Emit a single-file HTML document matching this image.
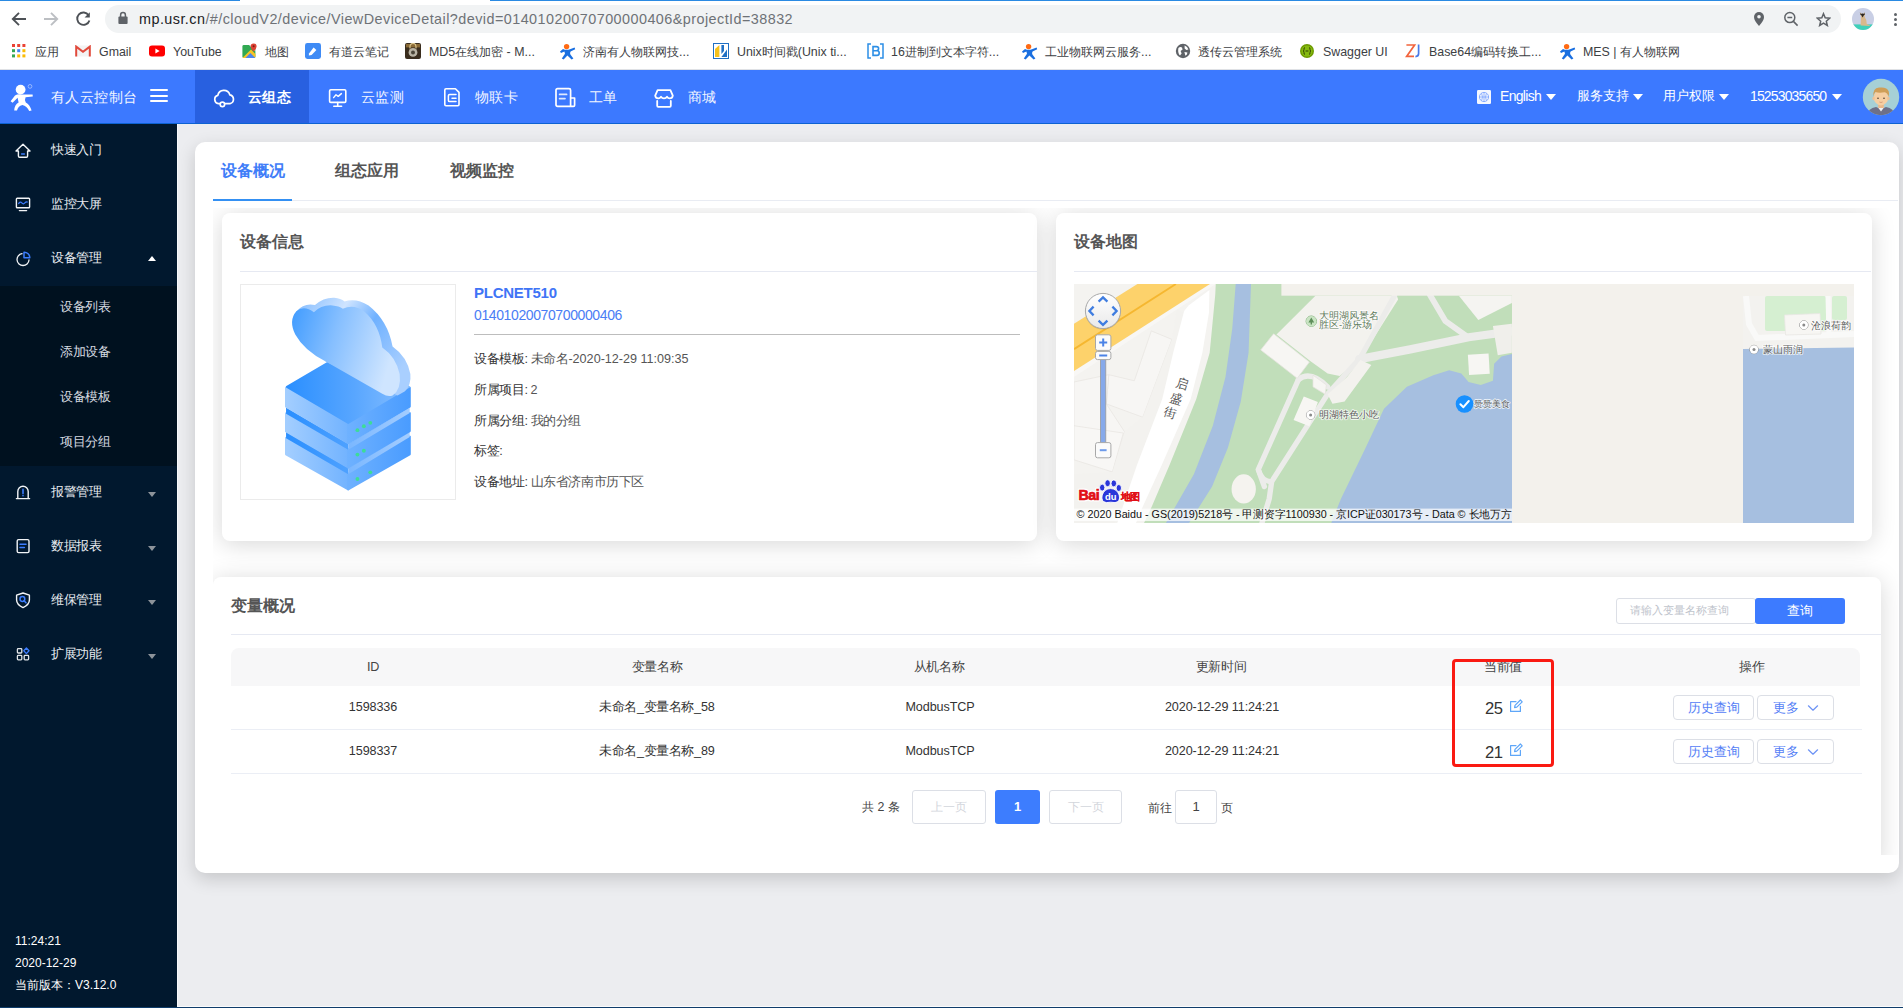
<!DOCTYPE html>
<html lang="zh">
<head>
<meta charset="utf-8">
<title>device</title>
<style>
*{box-sizing:border-box;margin:0;padding:0}
html,body{width:1903px;height:1008px;overflow:hidden;background:#fff;font-family:"Liberation Sans",sans-serif;}
.a{position:absolute;white-space:nowrap;overflow:hidden}
.t{position:absolute;white-space:nowrap;line-height:1}
/* ---------- browser chrome ---------- */
#chrome{left:0;top:0;width:1903px;height:70px;background:#fff}
#pill{left:105px;top:5px;width:1736px;height:28px;border-radius:14px;background:#f1f3f4}
.bm{font-size:12.4px;color:#3c4043;top:45.6px}
/* ---------- header ---------- */
#hdr{left:0;top:70px;width:1903px;height:54px;background:#3c79ff}
#hact{left:195px;top:0;width:114px;height:54px;background:#2860e0}
.tri{width:0;height:0;border-left:5px solid transparent;border-right:5px solid transparent;border-top:6.5px solid #fff}
/* ---------- sidebar ---------- */
#side{left:0;top:124px;width:177px;height:884px;background:#01182e}
#sub{left:0;top:162px;width:177px;height:180px;background:#00111f}
.st{letter-spacing:-0.4px;font-size:12.6px;color:#e8ecf1;left:51px}
.ss{letter-spacing:-0.4px;font-size:12.6px;color:#d5dae0;left:60px}
/* ---------- main ---------- */
#main{left:177px;top:124px;width:1726px;height:884px;background:#ecedf0}
#card{left:195px;top:142px;width:1704px;height:731px;background:#fff;border-radius:10px;box-shadow:0 6px 18px rgba(0,0,0,.165)}
.box{background:#fff;border-radius:8px;box-shadow:0 3px 24px rgba(0,0,0,.16)}
.h2{font-size:16px;font-weight:bold;color:#555}
.ln{background:#e6e9f2;height:1px}
.inf{letter-spacing:-0.4px;font-size:12.6px;color:#555;left:474px}
.th{letter-spacing:-0.4px;font-size:12.6px;color:#444;text-align:center;width:200px}
.td{font-size:12.6px;color:#333;text-align:center;width:240px;letter-spacing:-0.1px}
.btn{border:1px solid #dcdfe6;border-radius:4px;background:#fff;color:#5580f6;font-size:12.6px;height:25px;line-height:25px;text-align:center}
</style>
</head>
<body>
<!-- ======= BROWSER CHROME ======= -->
<div id="chrome" class="a">
  <div class="a" style="left:0;top:0;width:240px;height:1px;background:#2a8ae2"></div>
  <div class="a" style="left:490px;top:0;width:1413px;height:1px;background:#2a8ae2"></div>
  <div id="pill" class="a"></div>
  <!-- nav arrows -->
  <svg class="a" style="left:10px;top:10px" width="18" height="18" viewBox="0 0 18 18" fill="none" stroke="#4d5156" stroke-width="1.9" stroke-linejoin="miter"><path d="M16 9 H3.4 M9 2.8 L2.8 9 L9 15.2"/></svg>
  <svg class="a" style="left:42px;top:10px" width="18" height="18" viewBox="0 0 18 18" fill="none" stroke="#bcbfc3" stroke-width="1.9" stroke-linejoin="miter"><path d="M2 9 H14.6 M9 2.8 L15.2 9 L9 15.2"/></svg>
  <svg class="a" style="left:74px;top:10px" width="18" height="18" viewBox="0 0 18 18" fill="none" stroke="#4d5156" stroke-width="1.9"><path d="M14.6 5.2 A6.2 6.2 0 1 0 15.4 10.4"/><path d="M15.8 2.2 V7.4 H10.6 Z" fill="#4d5156" stroke="none"/></svg>
  <!-- lock -->
  <svg class="a" style="left:117px;top:11px" width="12" height="14" viewBox="0 0 12 14"><rect x="1.4" y="5.6" width="9.2" height="7.4" rx="1" fill="#5f6368"/><path d="M3.6 6 V4 A2.4 2.4 0 0 1 8.4 4 V6" fill="none" stroke="#5f6368" stroke-width="1.5"/></svg>
  <div class="t" id="url" style="left:139px;top:12px;font-size:14.4px;color:#202124;letter-spacing:0.445px">mp.usr.cn<span style="color:#6e7277">/#/cloudV2/device/ViewDeviceDetail?devid=01401020070700000406&amp;projectId=38832</span></div>
  <!-- right icons -->
  <svg class="a" style="left:1752px;top:11px" width="14" height="16" viewBox="0 0 14 16"><path d="M7 1 A5 5 0 0 1 12 6 Q12 9.6 7 15 Q2 9.6 2 6 A5 5 0 0 1 7 1 Z" fill="#5f6368"/><circle cx="7" cy="5.8" r="1.8" fill="#f1f3f4"/></svg>
  <svg class="a" style="left:1783px;top:11px" width="16" height="16" viewBox="0 0 16 16" fill="none" stroke="#5f6368" stroke-width="1.5"><circle cx="6.8" cy="6.6" r="5"/><path d="M10.4 10.4 L14.6 14.6 M4.4 6.6 H9.2"/></svg>
  <svg class="a" style="left:1815.5px;top:11.5px" width="15" height="15" viewBox="0 0 16 16" fill="none" stroke="#5f6368" stroke-width="1.6" stroke-linejoin="miter"><path d="M8 1.8 L9.8 6.2 L14.6 6.6 L11 9.8 L12.1 14.4 L8 11.9 L3.9 14.4 L5 9.8 L1.4 6.6 L6.2 6.2 Z"/></svg>
  <svg class="a" style="left:1851px;top:7px" width="24" height="24" viewBox="0 0 24 24"><defs><clipPath id="cav"><circle cx="12" cy="12" r="11"/></clipPath></defs><g clip-path="url(#cav)"><rect width="24" height="24" fill="#c9cfe5"/><rect y="17.4" width="24" height="7" fill="#3fd0b9"/><path d="M9.6 18.6 L10 9.6 L8.8 5.2 L10.6 6.8 L12.6 6.8 L14 5.2 L13.6 9.8 Q15.8 12.6 15.8 17 L19 18.4 L19 19 Z" fill="#d8b98c"/><path d="M9.6 7 L11.6 10.6 L13.6 7 Q11.6 6 9.6 7 Z" fill="#2b2622"/><path d="M8.8 5.2 L10.2 7.4 L9.6 8 Z M14 5.2 L12.9 7.4 L13.5 8 Z" fill="#2b2622"/></g></svg>
  <div class="a" style="left:1894px;top:13px;width:3px;height:3px;border-radius:50%;background:#5f6368"></div>
  <div class="a" style="left:1894px;top:18px;width:3px;height:3px;border-radius:50%;background:#5f6368"></div>
  <div class="a" style="left:1894px;top:23px;width:3px;height:3px;border-radius:50%;background:#5f6368"></div>
  <!-- bookmarks bar -->
  <div class="a" style="left:0;top:69px;width:1903px;height:1px;background:#dfe1e5"></div>
  <svg class="a" style="left:12px;top:44px" width="14" height="14" viewBox="0 0 14 14"><rect x="0" y="0" width="3" height="3" fill="#ea4335"/><rect x="5.2" y="0" width="3" height="3" fill="#ea4335"/><rect x="10.4" y="0" width="3" height="3" fill="#ea4335"/><rect x="0" y="5.2" width="3" height="3" fill="#34a853"/><rect x="5.2" y="5.2" width="3" height="3" fill="#4285f4"/><rect x="10.4" y="5.2" width="3" height="3" fill="#fbbc05"/><rect x="0" y="10.4" width="3" height="3" fill="#34a853"/><rect x="5.2" y="10.4" width="3" height="3" fill="#fbbc05"/><rect x="10.4" y="10.4" width="3" height="3" fill="#fbbc05"/></svg>
  <div class="t bm" style="left:35px">应用</div>
  <svg class="a" style="left:75px;top:45px" width="16" height="12" viewBox="0 0 16 12"><rect x="0.4" y="0.6" width="15.2" height="11" rx="1" fill="#f3f3f3"/><path d="M1.2 11.4 V1.6 L8 6.8 L14.8 1.6 V11.4" fill="none" stroke="#e14a3c" stroke-width="2"/></svg>
  <div class="t bm" style="left:99px">Gmail</div>
  <svg class="a" style="left:149px;top:45px" width="16" height="12" viewBox="0 0 16 12"><rect x="0" y="0.4" width="16" height="11.2" rx="3" fill="#ff0000"/><path d="M6.4 3.4 L10.6 6 L6.4 8.6 Z" fill="#fff"/></svg>
  <div class="t bm" style="left:173px">YouTube</div>
  <svg class="a" style="left:242px;top:43px" width="16" height="16" viewBox="0 0 16 16"><rect x="0.4" y="2" width="13" height="13" rx="1.4" fill="#31a952"/><path d="M0.4 15 L9 6.4 L13.4 11 V13.6 Q13.4 15 12 15 Z" fill="#f9c325"/><path d="M3.4 15 L8.4 10 L13.4 15 Z" fill="#4e86ec"/><path d="M7 2 L13.4 8.4 V3.4 Q13.4 2 12 2 Z" fill="#e9ecef"/><path d="M11.6 0.4 A3 3 0 0 1 14.6 3.4 Q14.6 5.4 11.6 8.4 Q8.6 5.4 8.6 3.4 A3 3 0 0 1 11.6 0.4 Z" fill="#dc4335"/><circle cx="11.6" cy="3.3" r="1" fill="#7e1b14"/></svg>
  <div class="t bm" style="left:265px">地图</div>
  <svg class="a" style="left:305px;top:43px" width="16" height="16" viewBox="0 0 16 16"><rect width="16" height="16" rx="2.4" fill="#3f8bf5"/><path d="M4 10.6 L8.6 4.6 L11.4 7 L6.6 12 L3.8 12.4 Z" fill="#fff"/></svg>
  <div class="t bm" style="left:329px">有道云笔记</div>
  <svg class="a" style="left:405px;top:43px" width="16" height="16" viewBox="0 0 16 16"><rect width="16" height="16" rx="2" fill="#3a2d1e"/><rect x="1" y="1" width="14" height="3.4" fill="#8a6a36"/><circle cx="8" cy="9.4" r="4.4" fill="#b9b3a4"/><circle cx="8" cy="9.4" r="2" fill="#4b4538"/><path d="M5 5.4 V3.4 A3 3 0 0 1 11 3.4 V5.4" fill="none" stroke="#d9c48c" stroke-width="1.2"/></svg>
  <div class="t bm" style="left:429px">MD5在线加密 - M...</div>
  <svg class="a" style="left:559px;top:43px" width="17" height="17" viewBox="0 0 17 17"><circle cx="7.6" cy="3.6" r="2.7" fill="#ff6a13"/><path d="M1 8.4 L4 6 Q7.4 7.6 11 6.2 L15.6 4.6 L16.2 6.2 L11.6 8.6 Q10.6 10 11.4 11.6 L14.4 15.4 L12.6 16.4 L8.4 12.6 L4.6 16.4 L2.8 15.4 L6 10.8 L5.4 8.6 L2 10 Z" fill="#1a6fe0"/></svg>
  <div class="t bm" style="left:583px">济南有人物联网技...</div>
  <svg class="a" style="left:713px;top:43px" width="16" height="16" viewBox="0 0 16 16"><rect x="0.5" y="0.5" width="15" height="15" fill="#fff" stroke="#1f6fc4" stroke-width="1"/><path d="M2 14 V6 L6.4 2 V14 Z" fill="#f6c21c"/><path d="M8.4 14 L14 6.4 V14 Z M8.4 2 H11 V8 L8.4 11 Z" fill="#1f6fc4"/></svg>
  <div class="t bm" style="left:737px">Unix时间戳(Unix ti...</div>
  <svg class="a" style="left:867px;top:43px" width="17" height="16" viewBox="0 0 17 16" fill="none" stroke="#2d8fe6" stroke-width="1.5"><path d="M4 1 H1 V15 H4 M13 1 H16 V15 H13"/><path d="M6 3.6 H9.4 Q11.6 3.6 11.6 5.6 Q11.6 7.8 9.4 7.8 H6 Z M6 7.8 H10 Q12.2 7.8 12.2 10 Q12.2 12.4 10 12.4 H6 Z" stroke-width="1.6"/></svg>
  <div class="t bm" style="left:891px">16进制到文本字符...</div>
  <svg class="a" style="left:1021px;top:43px" width="17" height="17" viewBox="0 0 17 17"><circle cx="7.6" cy="3.6" r="2.7" fill="#ff6a13"/><path d="M1 8.4 L4 6 Q7.4 7.6 11 6.2 L15.6 4.6 L16.2 6.2 L11.6 8.6 Q10.6 10 11.4 11.6 L14.4 15.4 L12.6 16.4 L8.4 12.6 L4.6 16.4 L2.8 15.4 L6 10.8 L5.4 8.6 L2 10 Z" fill="#1a6fe0"/></svg>
  <div class="t bm" style="left:1045px">工业物联网云服务...</div>
  <svg class="a" style="left:1175px;top:43px" width="16" height="16" viewBox="0 0 16 16"><circle cx="8" cy="8" r="7.2" fill="#5f6368"/><path d="M3.4 5 Q5 3.6 7 4.4 L7.6 6.4 L5.6 8 L6.6 10.4 L5 12.6 Q2.4 10 3.4 5 Z M9.6 2.6 Q12.6 3.6 13.4 6.4 L11.4 7 L9.6 5.4 Z M9.4 9 L12.4 9.4 Q12.4 11.6 10.4 12.8 Z" fill="#fff"/></svg>
  <div class="t bm" style="left:1198px">透传云管理系统</div>
  <svg class="a" style="left:1300px;top:44px" width="14" height="14" viewBox="0 0 14 14"><circle cx="7" cy="7" r="7" fill="#6d9a00"/><circle cx="7" cy="7" r="5.6" fill="#85ba10"/><path d="M5 3.6 Q3.6 3.6 4 5.4 Q4.2 6.8 3 7 Q4.2 7.2 4 8.6 Q3.6 10.4 5 10.4 M9 3.6 Q10.4 3.6 10 5.4 Q9.8 6.8 11 7 Q9.8 7.2 10 8.6 Q10.4 10.4 9 10.4" fill="none" stroke="#2e3d00" stroke-width="0.9"/><path d="M5.6 7 H8.4" stroke="#2e3d00" stroke-width="1"/></svg>
  <div class="t bm" style="left:1323px">Swagger UI</div>
  <svg class="a" style="left:1405px;top:43px" width="17" height="16" viewBox="0 0 17 16" fill="none" stroke-width="1.7"><path d="M1.4 2 H9.6 L1.6 13.4 H9" stroke="#f2643d"/><path d="M13.6 1.4 V10.6 Q13.6 13.6 10.4 13.6" stroke="#4a7be8"/></svg>
  <div class="t bm" style="left:1429px">Base64编码转换工...</div>
  <svg class="a" style="left:1559px;top:43px" width="17" height="17" viewBox="0 0 17 17"><circle cx="7.6" cy="3.6" r="2.7" fill="#ff6a13"/><path d="M1 8.4 L4 6 Q7.4 7.6 11 6.2 L15.6 4.6 L16.2 6.2 L11.6 8.6 Q10.6 10 11.4 11.6 L14.4 15.4 L12.6 16.4 L8.4 12.6 L4.6 16.4 L2.8 15.4 L6 10.8 L5.4 8.6 L2 10 Z" fill="#1a6fe0"/></svg>
  <div class="t bm" style="left:1583px">MES | 有人物联网</div>
</div>

<!-- ======= HEADER ======= -->
<div id="hdr" class="a">
  <div id="hact" class="a"></div>
  <div class="a" style="left:0;top:53px;width:1903px;height:1px;background:#0d62d2"></div>
  <!-- logo -->
  <svg class="a" style="left:7px;top:11px" width="30" height="32" viewBox="0 0 30 32"><circle cx="13.6" cy="8.6" r="4.9" fill="#fff"/><circle cx="23" cy="5.4" r="1.9" fill="none" stroke="#a9c4ff" stroke-width="0.8"/><path d="M3.6 20.2 L8 14.6 Q11 12.6 14.6 13.6 L25.6 13.4 L25.8 15.6 L18.6 16.2 Q17.2 19 18.8 21.4 Q22.8 23.4 24.6 29.6 L22.2 30 Q19.8 25 15.4 24 Q10.8 25.4 10 29.6 L7.2 29.4 Q7.6 23.4 11.6 21.4 L10.6 16.8 L5.6 21.8 Z" fill="#fff"/></svg>
  <div class="t" style="left:51px;top:20px;font-size:14.4px;color:#f1f5ff;letter-spacing:0.4px">有人云控制台</div>
  <div class="a" style="left:150px;top:19px;width:18px;height:2px;background:#fff;border-radius:1px"></div>
  <div class="a" style="left:150px;top:24.5px;width:18px;height:2px;background:#fff;border-radius:1px"></div>
  <div class="a" style="left:150px;top:30px;width:18px;height:2px;background:#fff;border-radius:1px"></div>
  <!-- nav icons -->
  <svg class="a" style="left:212px;top:17px" width="24" height="22" viewBox="0 0 24 22" fill="none" stroke="#fff" stroke-width="1.7" stroke-linejoin="round" stroke-linecap="round"><path d="M7.6 16.6 H6.4 A4.2 4.2 0 0 1 5.8 8.4 A6.2 6.2 0 0 1 17.8 7.8 A4.5 4.5 0 0 1 18 16.6 H13"/><circle cx="10.4" cy="17.4" r="2.2"/></svg>
  <svg class="a" style="left:327px;top:17px" width="22" height="22" viewBox="0 0 22 22" fill="none" stroke="#fff" stroke-width="1.6" stroke-linejoin="round" stroke-linecap="round"><rect x="2.6" y="2.8" width="16.2" height="12.6" rx="1.2"/><path d="M10.7 15.6 V19 M6.8 19.2 H14.6"/><path d="M6.6 10.6 L9 7.8 L11.2 9.4 L14.4 6.6" stroke-width="1.4"/></svg>
  <svg class="a" style="left:441px;top:16px" width="22" height="22" viewBox="0 0 22 22" fill="none" stroke="#fff" stroke-width="1.6" stroke-linejoin="round" stroke-linecap="round"><path d="M5 2.8 H14.4 L18 6.4 V18.6 Q18 19.8 16.8 19.8 H5 Q3.8 19.8 3.8 18.6 V4 Q3.8 2.8 5 2.8 Z"/><path d="M15 8.6 H8.6 Q7.4 8.6 7.4 9.8 V14.4 Q7.4 15.6 8.6 15.6 H15 M11 12.2 H15" stroke-width="1.5"/></svg>
  <svg class="a" style="left:553px;top:16px" width="24" height="24" viewBox="0 0 24 24" fill="none" stroke="#fff" stroke-width="1.7" stroke-linejoin="round" stroke-linecap="round"><path d="M17.6 20.4 H4.6 Q3 20.4 3 18.8 V4.2 Q3 2.6 4.6 2.6 H16 Q17.6 2.6 17.6 4.2 V20.4 H20.4 Q21.6 20.4 21.6 19.2 V12 H17.6"/><path d="M6.6 8.4 H13.6 M6.6 12.6 H12" stroke="#dfe9ff"/></svg>
  <svg class="a" style="left:652px;top:16px" width="24" height="24" viewBox="0 0 24 24" fill="none" stroke="#fff" stroke-width="1.8" stroke-linejoin="round" stroke-linecap="round"><path d="M5.6 4.2 H18.4 L20.8 9.6 Q20.4 12.4 17.8 12.4 Q16 12.4 15 10.8 Q14 12.4 12 12.4 Q10 12.4 9 10.8 Q8 12.4 6.2 12.4 Q3.6 12.4 3.2 9.6 Z"/><path d="M5.2 15 V19.8 Q5.2 20.8 6.2 20.8 H17.8 Q18.8 20.8 18.8 19.8 V15"/></svg>
  <div class="t" style="left:248px;top:20px;font-size:14.4px;color:#fff;font-weight:bold;letter-spacing:0.3px">云组态</div>
  <div class="t" style="left:361px;top:20px;font-size:14.4px;color:#f1f5ff;letter-spacing:0.3px">云监测</div>
  <div class="t" style="left:475px;top:20px;font-size:14.4px;color:#f1f5ff;letter-spacing:0.3px">物联卡</div>
  <div class="t" style="left:589px;top:20px;font-size:14.4px;color:#f1f5ff;letter-spacing:0.3px">工单</div>
  <div class="t" style="left:688px;top:20px;font-size:14.4px;color:#f1f5ff;letter-spacing:0.3px">商城</div>
  <!-- right -->
  <svg class="a" style="left:1477px;top:20px" width="14" height="14" viewBox="0 0 14 14"><rect width="14" height="14" rx="1.2" fill="#f4f7ff"/><circle cx="7" cy="7" r="4.6" fill="none" stroke="#7fa6ff" stroke-width="0.9"/><path d="M2.4 7 H11.6 M7 2.4 V11.6 M4.6 3.4 Q6.4 7 4.6 10.6 M9.4 3.4 Q7.6 7 9.4 10.6" fill="none" stroke="#7fa6ff" stroke-width="0.8"/></svg>
  <div class="t hr" style="left:1500px;top:19px;font-size:14px;color:#fff;letter-spacing:-0.7px">English</div>
  <div class="a tri" style="left:1546px;top:24px"></div>
  <div class="t" style="left:1577px;top:19px;font-size:13px;color:#fff">服务支持</div>
  <div class="a tri" style="left:1633px;top:24px"></div>
  <div class="t" style="left:1663px;top:19px;font-size:13px;color:#fff">用户权限</div>
  <div class="a tri" style="left:1719px;top:24px"></div>
  <div class="t" style="left:1750px;top:19px;font-size:14px;color:#fff;letter-spacing:-0.85px">15253035650</div>
  <div class="a tri" style="left:1832px;top:24px"></div>
  <!-- avatar -->
  <svg class="a" style="left:1862px;top:8px" width="38" height="38" viewBox="0 0 38 38"><defs><clipPath id="avc"><circle cx="19" cy="19" r="18.2"/></clipPath></defs><circle cx="19" cy="19" r="18.2" fill="#a6d0d6"/><g clip-path="url(#avc)"><path d="M5 38 Q6 30 14 29 L19 31 L24 29 Q32 30 33 38 Z" fill="#6d7088"/><path d="M15.6 29 L19 33.4 L22.4 29 L19 28 Z" fill="#eef1f4"/><rect x="16.2" y="25" width="5.6" height="5" fill="#eab98a"/><ellipse cx="19" cy="19.4" rx="7.2" ry="8" fill="#f6cfa2"/><ellipse cx="11.6" cy="20.4" rx="1.2" ry="1.8" fill="#f0c193"/><ellipse cx="26.4" cy="20.4" rx="1.2" ry="1.8" fill="#f0c193"/><path d="M11.4 18.4 Q10.6 10.4 17 9.6 Q25 8.6 26.8 13.4 Q27.4 16 26.6 18.6 Q25.6 14.8 22.6 14.2 Q17 15.2 13.4 14 Q11.8 15.6 11.4 18.4 Z" fill="#cf9f58"/><circle cx="16" cy="20.2" r="0.8" fill="#4a3a2c"/><circle cx="22" cy="20.2" r="0.8" fill="#4a3a2c"/><path d="M17.4 24 Q19 25 20.6 24" fill="none" stroke="#c98d6a" stroke-width="0.7"/></g></svg>
</div>

<!-- ======= SIDEBAR ======= -->
<div id="side" class="a">
  <div id="sub" class="a"></div>
  <!-- icons -->
  <svg class="a" style="left:14px;top:18px" width="18" height="18" viewBox="0 0 18 18" fill="none" stroke="#f2f4f7" stroke-width="1.4" stroke-linejoin="round" stroke-linecap="round"><path d="M2 9 L9 2.2 L16 9 H13.6 V14 Q13.6 15.2 12.4 15.2 H5.6 Q4.4 15.2 4.4 14 V9 Z"/><path d="M7.6 12 H10.4" stroke="#3d7dfe"/></svg>
  <svg class="a" style="left:14px;top:72px" width="18" height="18" viewBox="0 0 18 18" fill="none" stroke="#f2f4f7" stroke-width="1.4" stroke-linejoin="round" stroke-linecap="round"><rect x="2.4" y="2.2" width="13.2" height="9.6" rx="0.8"/><path d="M5.4 14.6 H12.6"/><path d="M4.6 7.6 Q6.2 5 7.8 6.8 T10.6 7.2 T13.4 6" stroke="#3d7dfe" stroke-width="1.2"/></svg>
  <svg class="a" style="left:14px;top:126px" width="18" height="18" viewBox="0 0 18 18" fill="none" stroke="#f2f4f7" stroke-width="1.3" stroke-linejoin="round" stroke-linecap="round"><path d="M8 3.6 A6 6 0 1 0 15 10"/><path d="M10 2.2 A5.6 5.6 0 0 1 15.8 7.8 H10 Z" stroke="#3d7dfe" stroke-width="1.5"/></svg>
  <svg class="a" style="left:14px;top:359px" width="18" height="18" viewBox="0 0 18 18" fill="none" stroke="#f2f4f7" stroke-width="1.4" stroke-linejoin="round" stroke-linecap="round"><path d="M3.8 15.4 V8.4 A5.2 5.2 0 0 1 14.2 8.4 V15.4"/><path d="M2.4 15.6 H15.6"/><path d="M9 6.4 V10.6 M9 12.6 V12.8" stroke="#3d7dfe" stroke-width="1.6"/></svg>
  <svg class="a" style="left:14px;top:413px" width="18" height="18" viewBox="0 0 18 18" fill="none" stroke="#f2f4f7" stroke-width="1.4" stroke-linejoin="round" stroke-linecap="round"><rect x="3.2" y="2.6" width="11.8" height="13" rx="1.4"/><path d="M6 7.2 H12 M6 10.6 H10.4" stroke="#3d7dfe" stroke-width="1.5"/></svg>
  <svg class="a" style="left:14px;top:467px" width="18" height="18" viewBox="0 0 18 18" fill="none" stroke="#f2f4f7" stroke-width="1.4" stroke-linejoin="round" stroke-linecap="round"><path d="M9 2 L15.4 4.2 V9 Q15.4 13.6 9 16.6 Q2.6 13.6 2.6 9 V4.2 Z"/><circle cx="8.4" cy="8" r="2.4" stroke="#3d7dfe" stroke-width="1.5"/><path d="M10 9.8 L12 11.8" stroke="#3d7dfe" stroke-width="1.6"/></svg>
  <svg class="a" style="left:14px;top:521px" width="18" height="18" viewBox="0 0 18 18" fill="none" stroke="#e1e4e8" stroke-width="1.3" stroke-linejoin="round"><rect x="3.4" y="3.6" width="4.4" height="4.4" rx="0.8"/><rect x="3.4" y="10.4" width="4.4" height="4.4" rx="0.8"/><rect x="10.2" y="10.4" width="4.4" height="4.4" rx="0.8"/><path d="M12.4 3 L15 5.8 L12.4 8.6 L9.8 5.8 Z" stroke="#3d7dfe"/></svg>
  <!-- labels -->
  <div class="t st" style="top:20px">快速入门</div>
  <div class="t st" style="top:74px">监控大屏</div>
  <div class="t st" style="top:128px">设备管理</div>
  <div class="t ss" style="top:177px">设备列表</div>
  <div class="t ss" style="top:222px">添加设备</div>
  <div class="t ss" style="top:267px">设备模板</div>
  <div class="t ss" style="top:312px">项目分组</div>
  <div class="t st" style="top:362px">报警管理</div>
  <div class="t st" style="top:416px">数据报表</div>
  <div class="t st" style="top:470px">维保管理</div>
  <div class="t st" style="top:524px">扩展功能</div>
  <!-- arrows -->
  <div class="a" style="left:147.8px;top:132.4px;width:0;height:0;border-left:4.7px solid transparent;border-right:4.7px solid transparent;border-bottom:5.6px solid #fff"></div>
  <div class="a" style="left:148px;top:368px;width:0;height:0;border-left:4.5px solid transparent;border-right:4.5px solid transparent;border-top:5.5px solid #8d939a"></div>
  <div class="a" style="left:148px;top:422px;width:0;height:0;border-left:4.5px solid transparent;border-right:4.5px solid transparent;border-top:5.5px solid #8d939a"></div>
  <div class="a" style="left:148px;top:476px;width:0;height:0;border-left:4.5px solid transparent;border-right:4.5px solid transparent;border-top:5.5px solid #8d939a"></div>
  <div class="a" style="left:148px;top:530px;width:0;height:0;border-left:4.5px solid transparent;border-right:4.5px solid transparent;border-top:5.5px solid #8d939a"></div>
  <!-- footer -->
  <div class="t" style="left:15px;top:811px;font-size:12px;color:#fff">11:24:21</div>
  <div class="t" style="left:15px;top:833px;font-size:12px;color:#fff">2020-12-29</div>
  <div class="t" style="left:15px;top:855px;font-size:12px;color:#fff">当前版本：V3.12.0</div>
</div>

<!-- ======= MAIN ======= -->
<div id="main" class="a"></div>
<div id="card" class="a"></div>
<div class="a" style="left:177px;top:124px;width:1px;height:883px;background:#f7f8fa"></div>
<div class="a" style="left:177px;top:1006px;width:1726px;height:1px;background:#fafbfc"></div>
<div class="a" style="left:0;top:1007px;width:1903px;height:1px;background:#0f3d6b"></div>

<!-- tabs -->
<div class="t" style="left:221px;top:163px;font-size:16px;font-weight:bold;color:#3f7df8">设备概况</div>
<div class="t" style="left:335px;top:163px;font-size:16px;font-weight:bold;color:#555">组态应用</div>
<div class="t" style="left:450px;top:163px;font-size:16px;font-weight:bold;color:#555">视频监控</div>
<div class="a" style="left:213px;top:200px;width:1685px;height:1px;background:#e9ecf3"></div>
<div class="a" style="left:213px;top:199px;width:79px;height:2px;background:#3490f3"></div>

<!-- clipped shadow container -->
<div class="a" id="clip" style="left:213px;top:208px;width:1685px;height:647px;overflow:hidden">
  <div class="a box" style="left:9px;top:5px;width:815px;height:328px;overflow:visible"></div>
  <div class="a box" style="left:843px;top:5px;width:816px;height:328px;overflow:visible"></div>
  <div class="a box" style="left:0px;top:369px;width:1668px;height:290px;overflow:visible"></div>
</div>
<!-- box 1 : device info -->
<div class="t h2" style="left:240px;top:234px">设备信息</div>
<div class="a ln" style="left:240px;top:271px;width:797px"></div>
<div class="a" id="imgbox" style="left:240px;top:284px;width:216px;height:216px;border:1px solid #ebebeb;background:#fff"></div>
<svg class="a" id="cloudsvg" style="left:240px;top:284px" width="216" height="216" viewBox="0 0 1008 1008">
<defs>
<linearGradient id="gTop" x1="0" y1="0" x2="1" y2="0"><stop offset="0" stop-color="#2a8fff"/><stop offset="0.55" stop-color="#58a6ff"/><stop offset="1" stop-color="#86beff"/></linearGradient>
<linearGradient id="gL" x1="0" y1="0" x2="1" y2="0"><stop offset="0" stop-color="#a3ceff"/><stop offset="1" stop-color="#72b3ff"/></linearGradient>
<linearGradient id="gR" x1="0" y1="0" x2="1" y2="0"><stop offset="0" stop-color="#6eb1ff"/><stop offset="1" stop-color="#4a9cff"/></linearGradient>
<linearGradient id="gSL" x1="0" y1="0" x2="1" y2="0"><stop offset="0" stop-color="#2a8fff"/><stop offset="1" stop-color="#4ea1ff"/></linearGradient>
<linearGradient id="gSR" x1="0" y1="0" x2="1" y2="0"><stop offset="0" stop-color="#7ab7ff"/><stop offset="1" stop-color="#a4cdff"/></linearGradient>
<linearGradient id="gCF" x1="0" y1="0" x2="1" y2="0.25"><stop offset="0" stop-color="#3f9bff"/><stop offset="0.45" stop-color="#86bfff"/><stop offset="1" stop-color="#cfe5ff"/></linearGradient>
<linearGradient id="gCB" x1="0" y1="0" x2="1" y2="0.6"><stop offset="0" stop-color="#7fbaff"/><stop offset="0.35" stop-color="#cfe4ff"/><stop offset="0.6" stop-color="#6fb1ff"/><stop offset="1" stop-color="#a9cfff"/></linearGradient>
</defs>
<g stroke-linejoin="round" stroke-width="10">
<!-- slab 3 -->
<path d="M215 718 L505 886 L505 958 L215 795 Z" fill="url(#gL)" stroke="url(#gL)"/>
<path d="M505 886 L792 712 L792 795 L505 958 Z" fill="url(#gR)" stroke="url(#gR)"/>
<!-- stripe 2 -->
<path d="M215 690 L505 858 L505 888 L215 720 Z" fill="url(#gSL)"/>
<path d="M505 858 L792 690 L792 714 L505 888 Z" fill="url(#gSR)"/>
<!-- slab 2 -->
<path d="M215 604 L505 772 L505 856 L215 688 Z" fill="url(#gL)" stroke="url(#gL)"/>
<path d="M505 772 L792 602 L792 686 L505 856 Z" fill="url(#gR)" stroke="url(#gR)"/>
<!-- stripe 1 -->
<path d="M215 576 L505 746 L505 774 L215 606 Z" fill="url(#gSL)"/>
<path d="M505 746 L792 578 L792 602 L505 774 Z" fill="url(#gSR)"/>
<!-- slab 1 -->
<path d="M215 484 L505 652 L505 742 L215 572 Z" fill="url(#gL)" stroke="url(#gL)"/>
<path d="M505 652 L792 484 L792 572 L505 742 Z" fill="url(#gR)" stroke="url(#gR)"/>
<path d="M219 480 L505 312 L788 480 L505 648 Z" fill="url(#gTop)" stroke="url(#gTop)"/>
</g>
<!-- cloud back/extrusion -->
<path d="M262 128 Q300 86 350 98 Q390 62 440 64 Q470 66 488 82 Q540 64 600 100 Q690 170 712 292 Q780 340 795 420 Q800 470 770 500 L735 520 L400 362 Z" fill="url(#gCB)"/>
<!-- cloud front -->
<path d="M400 362 Q300 312 258 236 Q226 170 262 128 Q298 96 345 132 Q380 96 432 100 Q462 102 480 116 Q530 92 580 128 Q650 188 664 296 Q728 340 745 420 Q754 492 712 520 Q690 528 664 512 Z" fill="url(#gCF)"/>
<g fill="#3ddc97"><circle cx="548" cy="682" r="9"/><circle cx="578" cy="664" r="9"/><circle cx="608" cy="648" r="9"/><circle cx="548" cy="796" r="9"/><circle cx="578" cy="778" r="9"/><circle cx="548" cy="910" r="9"/><circle cx="608" cy="879" r="9"/></g>
</svg>
<div class="t" style="left:474px;top:285px;font-size:15px;font-weight:bold;color:#3f74f6;letter-spacing:-0.25px">PLCNET510</div>
<div class="t" style="left:474px;top:308px;font-size:14px;color:#4a7df5;letter-spacing:-0.39px">01401020070700000406</div>
<div class="a" style="left:474px;top:334px;width:546px;height:1px;background:#bdbdbd"></div>
<div class="t inf" style="top:353px"><span style="color:#333">设备模板:</span> <span style="letter-spacing:-0.4px">未命名</span><span style="letter-spacing:0">-2020-12-29 11:09:35</span></div>
<div class="t inf" style="top:384px"><span style="color:#333">所属项目:</span> <span style="letter-spacing:0">2</span></div>
<div class="t inf" style="top:415px"><span style="color:#333">所属分组:</span> 我的分组</div>
<div class="t inf" style="top:445px"><span style="color:#333">标签:</span></div>
<div class="t inf" style="top:476px"><span style="color:#333">设备地址:</span> 山东省济南市历下区</div>

<!-- box 2 : map -->
<div class="t h2" style="left:1074px;top:234px">设备地图</div>
<div class="a ln" style="left:1074px;top:271px;width:797px"></div>
<div class="a" id="map" style="left:1074px;top:284px;width:780px;height:239px;background:#f3f1ec"></div>
<svg class="a" id="mapsvg" style="left:1074px;top:284px" width="780" height="239" viewBox="0 0 780 239">
<defs><clipPath id="tileL"><rect x="0" y="0" width="438" height="239"/></clipPath><clipPath id="tileR"><rect x="669" y="12" width="111" height="227"/></clipPath>
<linearGradient id="gNav" x1="0" y1="0" x2="0" y2="1"><stop offset="0" stop-color="#ffffff"/><stop offset="1" stop-color="#e9e9e9"/></linearGradient></defs>
<!-- LEFT TILE (zoom coords) -->
<g clip-path="url(#tileL)"><g transform="translate(-4.13,-4.13) scale(0.24313)">
  <rect x="0" y="0" width="1830" height="1010" fill="#f4f3f0"/>
  <!-- city blocks -->
  <g fill="#f7f6f4" stroke="#e7e5e1" stroke-width="3">
    <path d="M335 210 L420 245 L300 565 L150 510 L160 390 L265 415 Z"/>
    <path d="M17 420 L160 390 L150 510 L225 625 L175 790 L17 725 Z"/>
    <path d="M17 600 L220 630 L175 790 L17 740 Z" fill="#f8f7f5"/>
    <path d="M440 120 L490 145 L330 640 L210 940 L180 1000 L17 1000 L17 800 L175 790 L225 625 L300 565 L420 245 Z" fill="#f3f2ef" stroke="none"/>
  </g>
  <!-- yellow road -->
  <path d="M17 375 L17 400 L600 17 L576 17 Z" fill="#f8f7f5"/>
  <path d="M17 180 L278 17 L576 17 L17 375 Z" fill="#fdd26b"/>
  <path d="M17 285 L436 17" stroke="#f5b730" stroke-width="7.5" fill="none"/>
  <!-- white road -->
  <path d="M488 105 L574 42 L572 135 L545 300 L497 490 L378 761 L300 932 L272 1000 L195 1000 L218 932 L276 761 L380 490 L425 300 L470 128 Z" fill="#ffffff"/>
  <!-- green park -->
  <path d="M600 17 L598 60 L575 300 L520 490 L410 761 L337 932 L305 1000 L1830 1000 L1830 17 Z" fill="#c1deba"/>
  <!-- river -->
  <path d="M682 17 L668 200 L640 400 L588 600 L510 800 L395 1000 L490 1000 L585 850 L650 690 L703 500 L735 300 L745 17 Z" fill="#a6bfe0"/>
  <!-- plaza light area -->
  <path d="M1010 65 L1345 65 L1360 110 L1195 325 L1110 395 L1060 385 L990 335 L850 225 Z" fill="#f3f2ee"/>
  <path d="M1360 65 L1480 65 L1240 310 L1195 325 Z" fill="#c1deba"/>
  <!-- roads/paths -->
  <g fill="none" stroke="#ececea" stroke-linecap="round" stroke-linejoin="round">
    <path d="M1190 326 L1400 286 L1640 236 L1818 212" stroke-width="34"/>
    <path d="M1480 60 L1545 170 L1640 238" stroke-width="24"/>
    <path d="M1335 65 L1195 320 L1060 470 L830 830 L820 900 L790 1000" stroke-width="22"/>
    <path d="M940 410 L775 780 L800 850" stroke-width="22"/>
    <path d="M940 410 Q990 370 1060 440" stroke-width="22"/>
    <path d="M775 780 Q790 830 830 830" stroke-width="20"/>
    <path d="M1740 190 L1818 180 L1818 300 L1760 310 Z" fill="#f0efeb" stroke="none"/>
  </g>
  <path d="M1600 65 L1818 65 L1818 95 L1680 165 Z" fill="#f5f4f1"/>
  <!-- buildings -->
  <g fill="#f7f6f3" stroke="#e6e4df" stroke-width="3" stroke-linejoin="round">
    <path d="M838 222 L985 338 L935 405 L785 288 Z"/>
    <path d="M1000 392 L1055 432 L1050 470 L1000 440 Z"/>
    <path d="M962 480 L1020 502 L985 602 L920 576 Z" stroke="none"/>
    <path d="M1637 308 L1722 303 L1727 386 L1642 391 Z" stroke="none"/>
    <path d="M1060 470 L1140 400 L1195 330 L1240 350 L1130 500 L1080 510 Z" stroke="none" fill="#f3f2ee"/>
  </g>
  <ellipse cx="715" cy="860" rx="50" ry="60" fill="#f5f3ef"/>
  <!-- lake -->
  <path d="M1075 1000 L1115 900 L1212 700 L1292 530 L1386 440 L1495 392 L1560 372 L1610 385 L1640 420 L1690 432 L1740 415 L1745 345 L1775 315 L1818 305 L1830 305 L1830 1000 Z" fill="#a6bfe0"/>
  <!-- top beige strip -->
  <rect x="870" y="0" width="960" height="65" fill="#f3f1ec"/>
</g></g>
<!-- RIGHT TILE (px coords) -->
<g clip-path="url(#tileR)">
  <rect x="669" y="12" width="111" height="226" fill="#f3f2ef"/>
  <path d="M669 65 L780 63.5 L780 239 L669 239 Z" fill="#a6bfe0"/>
  <rect x="691" y="12" width="61" height="35" rx="2" fill="#d5efd1"/>
  <rect x="758" y="12" width="15" height="24" rx="2" fill="#d5efd1"/>
  <path d="M672 12 L675 40 L683 54 L780 50" fill="none" stroke="#f9f9f8" stroke-width="6"/>
  <path d="M754 12 L755 52" fill="none" stroke="#f9f9f8" stroke-width="5"/>
  <path d="M710.5 31 L746 29.5 L747 50 L711.5 51 Z" fill="#f7f6f3" stroke="#e9e7e3" stroke-width="0.8"/>
</g>
<!-- labels -->
<g font-family="'Liberation Sans',sans-serif" font-size="9.7" fill="#5b5b5b" stroke="#fff" stroke-opacity="0.75" stroke-width="1.8" paint-order="stroke" stroke-linejoin="round">
  <circle cx="237.3" cy="37.2" r="5.2" fill="#c9e4c3" stroke="#7fae7a" stroke-width="1" stroke-opacity="1"/><path d="M237.3 33.6 L240.2 38.6 H234.4 Z M236.6 38.6 H238 V40.6 H236.6 Z" fill="#5f8f5b" stroke="none"/>
  <text x="245" y="34.6" fill="#5d7a5a">大明湖风景名</text><text x="245" y="44.4" fill="#5d7a5a">胜区-游乐场</text>
  <circle cx="236.6" cy="131" r="4.2" fill="#fff" stroke="#8a8a8a" stroke-width="1" stroke-opacity="1"/><circle cx="236.6" cy="131" r="1.5" fill="#8a8a8a" stroke="none"/>
  <text x="244.5" y="134">明湖特色小吃</text>
  <text x="399.5" y="122.8" fill="#5f5f5f" font-size="9.2" clip-path="url(#tileL)">赞赞美食</text>
  <circle cx="729.8" cy="41" r="4.2" fill="#fff" stroke="#8a8a8a" stroke-width="1" stroke-opacity="1"/><circle cx="729.8" cy="41" r="1.5" fill="#8a8a8a" stroke="none"/>
  <text x="737" y="44.5">沧浪荷韵</text>
  <circle cx="680" cy="65.5" r="4.2" fill="#fff" stroke="#8a8a8a" stroke-width="1" stroke-opacity="1"/><circle cx="680" cy="65.5" r="1.5" fill="#8a8a8a" stroke="none"/>
  <text x="688.5" y="68.5">蒙山雨润</text>
  <g font-size="12.5" fill="#555"><text transform="translate(108.3,100.5) rotate(17)" text-anchor="middle" dominant-baseline="central">启</text><text transform="translate(102.2,115) rotate(17)" text-anchor="middle" dominant-baseline="central">盛</text><text transform="translate(96.3,129.2) rotate(17)" text-anchor="middle" dominant-baseline="central">街</text></g>
</g>
<!-- marker -->
<circle cx="390.5" cy="120" r="8.8" fill="#1890ff"/><path d="M386.4 120.2 L389.4 123.2 L394.8 117" fill="none" stroke="#fff" stroke-width="2" stroke-linecap="round" stroke-linejoin="round"/>
<!-- nav control -->
<circle cx="29" cy="27.8" r="17.8" fill="#000" fill-opacity="0.12"/><circle cx="29" cy="27" r="17.6" fill="url(#gNav)" stroke="#a9a9a9" stroke-width="1"/>
<g fill="none" stroke="#3f7de0" stroke-width="2.3" stroke-linecap="butt" stroke-linejoin="miter"><path d="M24.6 17.6 L29 13.4 L33.4 17.6"/><path d="M24.6 36.6 L29 40.8 L33.4 36.6"/><path d="M19.6 22.6 L15.4 27 L19.6 31.4"/><path d="M38.4 22.6 L42.6 27 L38.4 31.4"/></g>
<rect x="26.4" y="74" width="5.4" height="85" fill="#86a9ea" stroke="#9a9a9a" stroke-width="0.8"/>
<g fill="#fbfbfb" stroke="#a8a8a8" stroke-width="1"><rect x="21.5" y="50.8" width="15.4" height="15.6" rx="2"/><rect x="21.5" y="67.4" width="15.4" height="8.2" rx="2"/><rect x="21.5" y="158.6" width="15.4" height="15.2" rx="2"/></g>
<g stroke="#4b83e6" stroke-width="2"><path d="M25.2 58.6 H33.2 M29.2 54.6 V62.6"/><path d="M25.2 71.5 H33.2"/><path d="M25.8 166.2 H32.6" stroke="#6d9aea"/></g>
<!-- baidu logo -->
<g font-family="'Liberation Sans',sans-serif" font-weight="bold">
 <text x="4.4" y="216.2" font-size="14.2" fill="#e1262d" stroke="#fff" stroke-width="3" stroke-linejoin="round" letter-spacing="-0.4">Bai</text>
 <text x="4.4" y="216.2" font-size="14.2" fill="#e10f16" stroke="#e10f16" stroke-width="0.7" letter-spacing="-0.4">Bai</text>
 <g fill="#2a36d9" stroke="#fff" stroke-width="0.9"><ellipse cx="28.2" cy="203.6" rx="2.7" ry="3.5"/><ellipse cx="33.6" cy="199.2" rx="2.8" ry="3.5"/><ellipse cx="39.8" cy="199.4" rx="2.8" ry="3.5"/><ellipse cx="44.8" cy="204" rx="2.7" ry="3.5"/><path d="M36.6 204.6 Q42.6 204.6 45.2 211 Q46.8 217.8 41 218.6 Q36.6 217.8 32.4 218.6 Q26.6 217.8 28.2 211 Q30.6 204.6 36.6 204.6 Z"/></g>
 <text x="36.7" y="216.2" text-anchor="middle" font-size="9.4" fill="#fff">du</text>
 <text x="46.6" y="215.6" font-size="10.4" fill="#e1262d" stroke="#fff" stroke-width="2.6" stroke-linejoin="round" letter-spacing="-0.2">地图</text>
 <text x="46.6" y="215.6" font-size="10.4" fill="#e10f16" stroke="#e10f16" stroke-width="0.2" letter-spacing="-0.2">地图</text>
</g>
<!-- copyright -->
<rect x="0" y="224.6" width="438" height="12.4" fill="#fff" fill-opacity="0.72"/>
<text x="2.6" y="234.4" font-family="'Liberation Sans',sans-serif" font-size="11" fill="#111" textLength="435" lengthAdjust="spacingAndGlyphs">© 2020 Baidu - GS(2019)5218号 - 甲测资字1100930 - 京ICP证030173号 - Data © 长地万方</text>
</svg>

<!-- box 3 : variables -->
<div class="t h2" style="left:231px;top:598px">变量概况</div>
<div class="a ln" style="left:231px;top:634px;width:1650px"></div>
<div class="a" style="left:1616px;top:598px;width:140px;height:26px;border:1px solid #dcdfe6;border-radius:3px;background:#fff"></div>
<div class="t" style="left:1630px;top:605px;font-size:11px;color:#c0c4cc">请输入变量名称查询</div>
<div class="a" style="left:1755px;top:598px;width:90px;height:26px;border-radius:3px;background:#3d7bff"></div>
<div class="t" style="left:1787px;top:604px;font-size:13px;color:#fff">查询</div>

<div class="a" style="left:231px;top:648px;width:1629px;height:38px;background:#f7f7f8;border-radius:8px 8px 0 0"></div>
<div class="t th" style="left:273px;top:660.6px">ID</div>
<div class="t th" style="left:557px;top:660.6px">变量名称</div>
<div class="t th" style="left:839px;top:660.6px">从机名称</div>
<div class="t th" style="left:1121px;top:660.6px">更新时间</div>
<div class="t th" style="left:1403px;top:660.6px">当前值</div>
<div class="t th" style="left:1652px;top:660.6px">操作</div>

<div class="t td" style="left:253px;top:700.8px">1598336</div>
<div class="t td" style="left:537px;top:700.8px"><span style="letter-spacing:-0.4px">未命名_变量名称</span>_58</div>
<div class="t td" style="left:820px;top:700.8px">ModbusTCP</div>
<div class="t td" style="left:1102px;top:700.8px">2020-12-29 11:24:21</div>
<div class="a" style="left:231px;top:729px;width:1631px;height:1px;background:#ebeef5"></div>
<div class="t td" style="left:253px;top:744.8px">1598337</div>
<div class="t td" style="left:537px;top:744.8px"><span style="letter-spacing:-0.4px">未命名_变量名称</span>_89</div>
<div class="t td" style="left:820px;top:744.8px">ModbusTCP</div>
<div class="t td" style="left:1102px;top:744.8px">2020-12-29 11:24:21</div>
<div class="a" style="left:231px;top:773px;width:1631px;height:1px;background:#ebeef5"></div>

<div class="t" style="left:1485px;top:700.5px;font-size:16.6px;color:#333;letter-spacing:-0.5px">25</div>
<div class="t" style="left:1485px;top:744.5px;font-size:16.6px;color:#333;letter-spacing:-0.5px">21</div>

<div class="a btn" style="left:1673px;top:695px;width:81px">历史查询</div>
<div class="a btn" style="left:1757px;top:695px;width:77px;text-align:left;padding-left:15px">更多</div>
<div class="a btn" style="left:1673px;top:739px;width:81px">历史查询</div>
<div class="a btn" style="left:1757px;top:739px;width:77px;text-align:left;padding-left:15px">更多</div>

<div class="a" style="left:1452px;top:659px;width:102px;height:108px;border:3px solid #fa1a12;border-radius:4px"></div>
<svg class="a" style="left:1509px;top:699px" width="15" height="14" viewBox="0 0 15 14" fill="none" stroke="#5ea6f8" stroke-width="1.2" stroke-linejoin="round" stroke-linecap="round"><path d="M11.4 7.4 V12.4 H1.6 V2.6 H7"/><path d="M5.6 8.6 L6 6.4 L11.4 1 L13.2 2.8 L7.8 8.2 Z"/></svg>
<svg class="a" style="left:1509px;top:743px" width="15" height="14" viewBox="0 0 15 14" fill="none" stroke="#5ea6f8" stroke-width="1.2" stroke-linejoin="round" stroke-linecap="round"><path d="M11.4 7.4 V12.4 H1.6 V2.6 H7"/><path d="M5.6 8.6 L6 6.4 L11.4 1 L13.2 2.8 L7.8 8.2 Z"/></svg>
<svg class="a" style="left:1807px;top:704px" width="12" height="8" viewBox="0 0 12 8" fill="none" stroke="#6d93f5" stroke-width="1.2" stroke-linecap="round" stroke-linejoin="round"><path d="M1.4 1.8 L6 6.2 L10.6 1.8"/></svg>
<svg class="a" style="left:1807px;top:748px" width="12" height="8" viewBox="0 0 12 8" fill="none" stroke="#6d93f5" stroke-width="1.2" stroke-linecap="round" stroke-linejoin="round"><path d="M1.4 1.8 L6 6.2 L10.6 1.8"/></svg>

<!-- pagination -->
<div class="t" style="left:862px;top:801px;font-size:12.4px;color:#444">共 2 条</div>
<div class="a" style="left:912px;top:790px;width:74px;height:34px;border:1px solid #dcdfe6;border-radius:3px;background:#fff;color:#d3d6dc;font-size:12.4px;line-height:33px;text-align:center">上一页</div>
<div class="a" style="left:995px;top:790px;width:45px;height:34px;border-radius:3px;background:#3d7dfe;color:#fff;font-size:13px;font-weight:bold;line-height:34px;text-align:center">1</div>
<div class="a" style="left:1049px;top:790px;width:73px;height:34px;border:1px solid #dcdfe6;border-radius:3px;background:#fff;color:#d3d6dc;font-size:12.4px;line-height:33px;text-align:center">下一页</div>
<div class="t" style="left:1148px;top:801.5px;font-size:12.4px;color:#444">前往</div>
<div class="a" style="left:1175px;top:790px;width:42px;height:34px;border:1px solid #dcdfe6;border-radius:3px;background:#fff;color:#444;font-size:13px;line-height:32px;text-align:center">1</div>
<div class="t" style="left:1221px;top:801.5px;font-size:12.4px;color:#444">页</div>

</body>
</html>
